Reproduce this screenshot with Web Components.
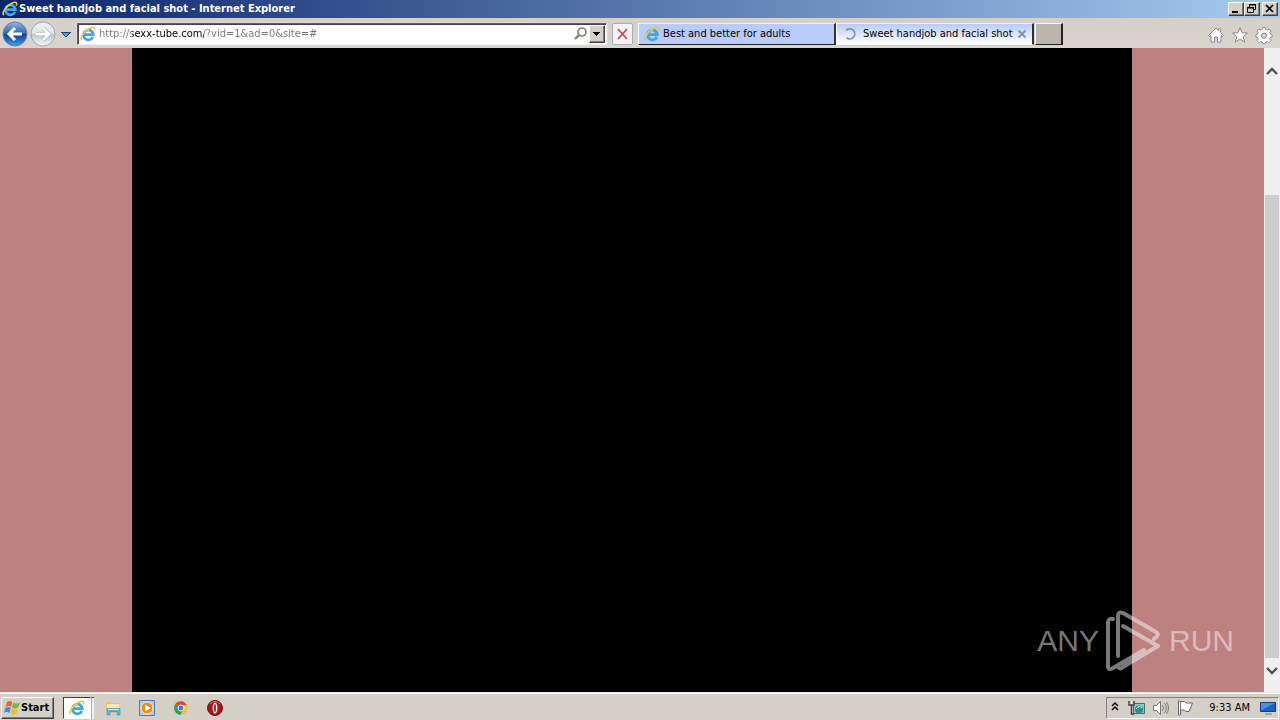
<!DOCTYPE html>
<html lang="en">
<head>
<meta charset="utf-8">
<title>Sweet handjob and facial shot - Internet Explorer</title>
<style>
html, body { height: 100%; margin: 0; }
body { font: 11px/14px "DejaVu Sans Condensed", "DejaVu Sans", sans-serif; color: #000; overflow: hidden; }
</style>
</head>
<body>
<desktop-shell></desktop-shell>
<script>
const define = (name, html) => {
  const template = document.createElement('template');
  template.innerHTML = html;
  customElements.define(name, class extends HTMLElement {
    constructor() {
      super();
      this.attachShadow({ mode: 'open' }).append(template.content.cloneNode(true));
    }
  });
};

define('ie-icon', `
<style>:host { display: block; width: 16px; height: 16px; flex: none; } svg { display: block; width: 100%; height: 100%; }</style>
<svg viewBox="0 0 16 16" aria-hidden="true">
  <path d="M12.900 10.900A4.900 4.900 0 1 1 13.300 8.700H4.800" fill="none" stroke="#3fa5e4" stroke-width="2.700"/>
  <path d="M4 6.600Q5.800 3.900 9 4" fill="none" stroke="#9bdcf8" stroke-width="1"/>
  <path d="M2 14.200C-.6 12.400 3.500 5.800 8.400 3 12 .6 16 .2 14.300 4.600" fill="none" stroke="#e6c945" stroke-width="1.600"/>
</svg>`);

define('title-bar', `
<style>
:host { display: flex; align-items: center; height: 18px; padding: 0 2px; gap: 1px; background: linear-gradient(90deg, #0a246a, #a6caf0); color: #fff; }
h1 { flex: 1; margin: 0; font: bold 11px/18px "DejaVu Sans Condensed", "DejaVu Sans", sans-serif; white-space: nowrap; }
.controls { display: flex; }
button { box-sizing: border-box; width: 16px; height: 14px; padding: 0; background: #d4d0c8; border: 1px solid; border-color: #fff #404040 #404040 #fff; box-shadow: inset -1px -1px #808080; }
button:last-child { margin-left: 2px; }
svg { display: block; width: 14px; height: 12px; }
</style>
<ie-icon></ie-icon>
<h1><slot></slot></h1>
<div class="controls">
<button aria-label="Minimize"><svg viewBox="0 0 14 12"><path d="M3 8h6v2H3z"/></svg></button>
<button aria-label="Restore"><svg viewBox="0 0 14 12" fill="none" stroke="#000"><path d="M4.500 4V1.500h6v5H9M4 2h7M2.500 4.500h6v5h-6zM2 5h7"/></svg></button>
<button aria-label="Close"><svg viewBox="0 0 14 12"><path d="M3 2l7 7M10 2L3 9" stroke="#000" stroke-width="1.700"/></svg></button>
</div>`);

define('nav-buttons', `
<style>
:host { display: flex; align-items: center; gap: 2px; flex: none; }
button { padding: 0; border: 0; background: none; }
svg { display: block; }
</style>
<button aria-label="Back"><svg width="26" height="26" viewBox="0 0 26 26">
<defs><linearGradient id="b" x2="0" y2="1"><stop stop-color="#8fb2e4"/><stop offset=".48" stop-color="#2f65b8"/><stop offset=".52" stop-color="#123f91"/><stop offset="1" stop-color="#36a4ed"/></linearGradient></defs>
<circle cx="13" cy="13" r="12" fill="url(#b)" stroke="#6f7f99"/><path d="M20 13H8M13 7l-6 6 6 6" fill="none" stroke="#fff" stroke-width="3"/></svg></button>
<button aria-label="Forward"><svg width="26" height="26" viewBox="0 0 26 26">
<defs><linearGradient id="f" x2="0" y2="1"><stop stop-color="#f2f4f8"/><stop offset=".48" stop-color="#dfe3e9"/><stop offset=".52" stop-color="#bcc4cd"/><stop offset="1" stop-color="#f6f9fb"/></linearGradient></defs>
<circle cx="13" cy="13" r="12" fill="url(#f)" stroke="#a1a5ab"/><path d="M6 13h12M13 7l6 6-6 6" fill="none" stroke="#9da5ad" stroke-width="4"/><path d="M6 13h12M13 7l6 6-6 6" fill="none" stroke="#fff" stroke-width="2.800"/></svg></button>
<button aria-label="Recent pages"><svg width="16" height="26" viewBox="0 0 16 26"><path d="M3.500 11.500h9L8 16z" fill="#48a5df" stroke="#173e6d"/></svg></button>`);

define('address-bar', `
<style>
:host { display: flex; align-items: center; box-sizing: border-box; height: 22px; padding: 0 1px 0 2px; background: #fff; border: 1px solid; border-color: #625b66 #eee #eee #625b66; box-shadow: inset 1px 1px #47404e, 0 0 0 1px #dedbd6; }
input { flex: 1; min-width: 0; padding: 0; margin-left: 3px; border: 0; outline: 0; font: inherit; height: 18px; color: #777;
  background: linear-gradient(90deg, #777 33px, #000 33px 105px, #777 105px); background-clip: text; -webkit-background-clip: text; -webkit-text-fill-color: transparent; }
button { padding: 0; border: 0; background: none; flex: none; }
.drop { box-sizing: border-box; width: 16px; height: 18px; background: #d4d0c8; border: 1px solid; border-color: #fff #404040 #404040 #fff; box-shadow: inset -1px -1px #808080; }
svg { display: block; }
</style>
<ie-icon></ie-icon>
<input type="text" aria-label="Address" spellcheck="false" value="http://sexx-tube.com/?vid=1&amp;ad=0&amp;site=#">
<button aria-label="Search"><svg width="16" height="16" viewBox="0 0 16 16"><circle cx="9" cy="6" r="4" fill="none" stroke="#808080" stroke-width="1.700"/><path d="M6 9l-4 4" stroke="#808080" stroke-width="2.400"/></svg></button>
<button class="drop" aria-label="Show address list"><svg width="14" height="16" viewBox="0 0 14 16"><path d="M3 6h7v1H9v1H8v1H7v1H6V9H5V8H4V7H3z"/></svg></button>`);

define('stop-button', `
<style>
:host { display: block; flex: none; }
button { display: block; box-sizing: border-box; width: 21px; height: 22px; padding: 3px 2px; background: #f3f3f4; border: 1px solid #a7adb5; border-radius: 2px; }
svg { display: block; }
</style>
<button aria-label="Stop"><svg width="15" height="14" viewBox="0 0 15 14"><path d="M3 2l9 10M12 2L3 12" stroke="#c44646" stroke-width="1.700"/></svg></button>`);

define('browser-tab', `
<style>
:host { display: flex; align-items: center; flex: 0 1 198px; box-sizing: border-box; min-width: 0; height: 22px; padding: 0 5px; background: #b8cbfa; border: 1px solid; border-color: #eef2fc #303030 #202020 #fff; border-right-width: 2px; }
:host([active]) { background: linear-gradient(#b7cbfb, #fff); border-bottom-color: #fff; }
button.label { display: flex; align-items: center; gap: 3px; flex: 1; min-width: 0; padding: 1px 0 0; border: 0; background: none; font: inherit; color: #000; white-space: nowrap; text-align: left; }
button.close { display: none; padding: 0; border: 0; background: none; }
:host([active]) button.close { display: block; }
svg { display: block; }
</style>
<button class="label" role="tab"><slot name="icon"></slot><span><slot></slot></span></button>
<button class="close" aria-label="Close tab"><svg width="10" height="10" viewBox="0 0 10 10"><path d="M1.500 1.500l7 7M8.500 1.500l-7 7" stroke="#8792a6" stroke-width="2"/></svg></button>`);

define('loading-ring', `
<style>:host { display: block; width: 16px; height: 16px; flex: none; margin-right: 2px; } svg { display: block; }</style>
<svg width="16" height="16" viewBox="0 0 16 16"><path d="M4 4.500A5 5 0 1 1 4.500 11.700" fill="none" stroke="#8799b8" stroke-width="2"/></svg>`);

define('tool-bar', `
<style>
:host { display: flex; align-items: center; height: 30px; box-sizing: border-box; padding: 1px 7px 0 2px; background: linear-gradient(#d4d0c8, #d8d4ce); }
address-bar { flex: 0 1 530px; margin-left: 3px; }
stop-button { margin: 0 5px 0 5px; }
.tabs { display: flex; flex: 0 1 426px; min-width: 0; }
.new { box-sizing: border-box; width: 28px; height: 22px; flex: none; padding: 0; margin-left: 1px; background: #bbb5ac; border: 1px solid; border-color: #fff #222 #222 #fff; border-right-width: 2px; }
.tools { display: flex; gap: 6px; margin-left: auto; padding-top: 2px; }
.tools button { padding: 0; border: 0; background: none; }
svg { display: block; fill: #fff; stroke: #8b8b8b; }
</style>
<nav-buttons></nav-buttons>
<address-bar></address-bar>
<stop-button></stop-button>
<div class="tabs">
<browser-tab><ie-icon slot="icon"></ie-icon>Best and better for adults</browser-tab>
<browser-tab active><loading-ring slot="icon"></loading-ring>Sweet handjob and facial shot</browser-tab>
<button class="new" aria-label="New tab"></button>
</div>
<div class="tools">
<button aria-label="Home"><svg width="18" height="18" viewBox="0 0 18 18"><path d="M1.500 9.500L9 2l2.500 2.500V3h2v3.500l3 3-1 1-1.500-1v6.500h-3.500v-5h-3v5H4V9.500l-1.500 1z"/></svg></button>
<button aria-label="Favorites"><svg width="18" height="18" viewBox="0 0 18 18"><path d="M9 1.500l2 5.300 5.500.2-4.300 3.600 1.500 5.400L9 13l-4.700 3 1.500-5.400L1.500 7 7 6.800z"/></svg></button>
<button aria-label="Tools"><svg width="18" height="18" viewBox="0 0 18 18"><path d="M7.500 1.500h3l.4 2 1.300.6 1.800-1.200 2 2-1.200 1.800.6 1.300 1.600.4v2.700l-1.600.4-.6 1.300 1.200 1.800-2 2-1.800-1.200-1.300.6-.4 1.500h-3l-.4-1.500-1.300-.6-1.800 1.200-2-2 1.200-1.800-.6-1.300L1 11.100V8.400L2.600 8l.6-1.300L2 4.900l2-2 1.800 1.200 1.300-.6z"/><circle cx="9" cy="9.700" r="2.600" fill="#d5d1c9"/></svg></button>
</div>`);

define('scroll-bar', `
<style>
:host { display: grid; grid-template-rows: 38px 109fr 463fr 34px; width: 16px; background: #f0f0f0; }
button { display: flex; align-items: center; justify-content: center; padding: 0; border: 0; background: none; }
.up { padding-top: 8px; }
.down { grid-row: 4; padding-bottom: 8px; }
.thumb { grid-row: 3; margin: 0 1px; background: #cdcdcd; }
svg { display: block; fill: none; stroke: #505050; stroke-width: 2.400; }
</style>
<button class="up" aria-label="Scroll up"><svg width="12" height="8" viewBox="0 0 12 8"><path d="M1 7l5-5 5 5"/></svg></button>
<div class="thumb"></div>
<button class="down" aria-label="Scroll down"><svg width="12" height="8" viewBox="0 0 12 8"><path d="M1 1l5 5 5-5"/></svg></button>`);

define('any-watermark', `
<style>
:host { display: flex; align-items: center; gap: 7px; color: rgba(255,255,255,.48); font: 30px/60px "Liberation Sans Narrow", "Liberation Sans", sans-serif; }
svg { display: block; flex: none; }
</style>
<span>ANY</span>
<svg width="56" height="62" viewBox="0 0 56 62" fill="none" stroke="currentColor" stroke-width="4" stroke-linejoin="round" stroke-linecap="round">
<path d="M7 9Q2 8 2 13V56Q2 61 7 58L38 40M12 46V6Q12 1 17 3L50 22Q54 25 49 28L48 29M17 16L52 36L17 57Q14 60 12 57"/>
</svg>
<span>RUN</span>`);

define('page-view', `
<style>
:host { display: flex; min-height: 0; background: #bd8180; position: relative; }
main { flex: 1; display: flex; justify-content: center; min-width: 0; }
.player { width: 100%; max-width: 1000px; background: #000; }
any-watermark { position: absolute; right: 46px; bottom: 20px; }
</style>
<main><div class="player" role="img" aria-label="Video player"></div></main>
<scroll-bar></scroll-bar>
<any-watermark></any-watermark>`);

define('task-bar', `
<style>
:host { display: flex; align-items: center; height: 28px; box-sizing: border-box; padding: 2px 1px 0; background: #d4d0c8; border-top: 1px solid #e9e7e3; box-shadow: inset 0 1px #fff; }
button { padding: 0; border: 0; background: none; font: inherit; color: #000; }
svg { display: block; }
.start { display: flex; align-items: center; gap: 1px; box-sizing: border-box; width: 53px; height: 22px; padding: 0 2px; border: 1px solid; border-color: #fff #404040 #404040 #fff; box-shadow: inset -1px -1px #808080; font-weight: bold; }
.ie { display: flex; align-items: center; justify-content: center; box-sizing: border-box; width: 28px; height: 22px; margin-left: 9px; background: #fff; border: 1px solid; border-color: #404040 #fff #fff #404040; }
.edge { box-sizing: border-box; width: 3px; height: 22px; background: #f3f2ef; border-top: 1px solid #404040; border-left: 1px solid #aaa; }
.quick { display: flex; gap: 18px; margin-left: 11px; }
.tray { display: flex; align-items: center; gap: 8px; box-sizing: border-box; height: 22px; margin-left: auto; padding: 0 2px 0 3px; border: 1px solid; border-color: #808080 #fff #fff #808080; }
time { margin: 0 2px 0 8px; }
</style>
<button class="start"><svg width="16" height="16" viewBox="0 0 16 16"><path d="M3 2q3-2 5.500 0L7 7Q4.500 5 1.500 7z" fill="#ed6430"/><path d="M9.300 2.500q3 2 6.500 0l-1.500 5q-3 2-6.300 0z" fill="#7cb93a"/><path d="M1.300 8q3-2 5.500 0l-1.500 5q-2.500-2-5.300 0z" fill="#3f91d6"/><path d="M7.700 8.500q3 2 6.300 0l-1.500 5q-3 2-6.300 0z" fill="#f4bd24"/></svg><span>Start</span></button>
<button class="ie" aria-label="Internet Explorer"><ie-icon></ie-icon></button><span class="edge"></span>
<div class="quick">
<button aria-label="File Explorer"><svg width="16" height="16" viewBox="0 0 16 16"><path d="M1 2h5l1 1h7v10H1z" fill="#e5c268"/><path d="M2 4h12v7H2z" fill="#f9e9a5"/><path d="M2 15V8.500h13V15h-3v-3.500H5V15z" fill="#62b4df" stroke="#388dbb" stroke-width=".6"/><path d="M3 9.500h11" stroke="#c5ecfb"/></svg></button>
<button aria-label="Media Player"><svg width="16" height="16" viewBox="0 0 16 16"><path d="M.5.5h15v15H.5z" fill="#a8cdee" stroke="#477eae"/><circle cx="8" cy="8" r="6" fill="#f38b1b" stroke="#fff1c4"/><path d="M6 4.500L11.500 8 6 11.500z" fill="#fff"/></svg></button>
<button aria-label="Chrome"><svg width="16" height="16" viewBox="0 0 16 16"><path d="M8 8L2 4.500A7 7 0 0 1 14 5H8z" fill="#db4437"/><path d="M8 8L2 4.500A7 7 0 0 0 7.500 15L11 9z" fill="#28a456"/><path d="M8 5h6a7 7 0 0 1-6.500 10L11 9z" fill="#f5c52e"/><circle cx="8" cy="8" r="3" fill="#3c7de0" stroke="#fff"/></svg></button>
<button aria-label="Opera"><svg width="16" height="16" viewBox="0 0 16 16"><circle cx="8" cy="8" r="7.500" fill="#b11219" stroke="#6d1014"/><path d="M3 4Q8-1 13 4" fill="none" stroke="#e26a6a"/><ellipse cx="8" cy="8" rx="2.400" ry="5.500" fill="#fff"/><ellipse cx="8" cy="8" rx=".9" ry="4.300" fill="#9a1318"/></svg></button>
</div>
<div class="tray">
<button aria-label="Show hidden icons"><svg width="10" height="16" viewBox="0 0 10 16" fill="none" stroke="#000" stroke-width="1.500"><path d="M2 6l3-3 3 3M2 10l3-3 3 3"/></svg></button>
<button aria-label="Network"><svg width="17" height="16" viewBox="0 0 17 16"><path d="M5.500 3.500h11v10h-11z" fill="#8ccac5" stroke="#4b6b6b"/><circle cx="11" cy="9.500" r="4" fill="#2b9188"/><path d="M8 9q3-4 6-1" stroke="#d6f7e9" fill="none"/><path d="M1 1v4h5V1M3.500 5v9h3" fill="none" stroke="#454545" stroke-width="1.500"/><path d="M3.500 1v3" stroke="#fff"/></svg></button>
<button aria-label="Volume"><svg width="16" height="16" viewBox="0 0 16 16" fill="none" stroke="#777"><path d="M.5 5.500h3l4-4v13l-4-4h-3z" fill="#fff"/><path d="M9.500 5q2 3 0 6M11.500 3q3.500 5 0 10M13.500 2q4 6 0 12"/></svg></button>
<button aria-label="Action Center"><svg width="16" height="16" viewBox="0 0 16 16"><path d="M1.500 1v14h2v-5h4l1.500 1.500h3L15.500 3H9L7.500 1.500h-4V1z" fill="#fff" stroke="#666"/><path d="M3.500 2v8" stroke="#777"/></svg></button>
<time datetime="09:33">9:33 AM</time>
<button aria-label="Show desktop"><svg width="16" height="16" viewBox="0 0 16 16"><path d="M.5 2.500h15v9H.5z" fill="#1e5fbd" stroke="#173d72"/><path d="M1 3h14L2 10H1z" fill="#4b91e2"/><path d="M5 14h7" stroke="#69727d"/></svg></button>
</div>`);

define('desktop-shell', `
<style>:host { display: grid; grid-template-rows: auto auto 1fr auto; height: 100vh; }</style>
<title-bar>Sweet handjob and facial shot - Internet Explorer</title-bar>
<tool-bar></tool-bar>
<page-view></page-view>
<task-bar></task-bar>`);
</script>
</body>
</html>
